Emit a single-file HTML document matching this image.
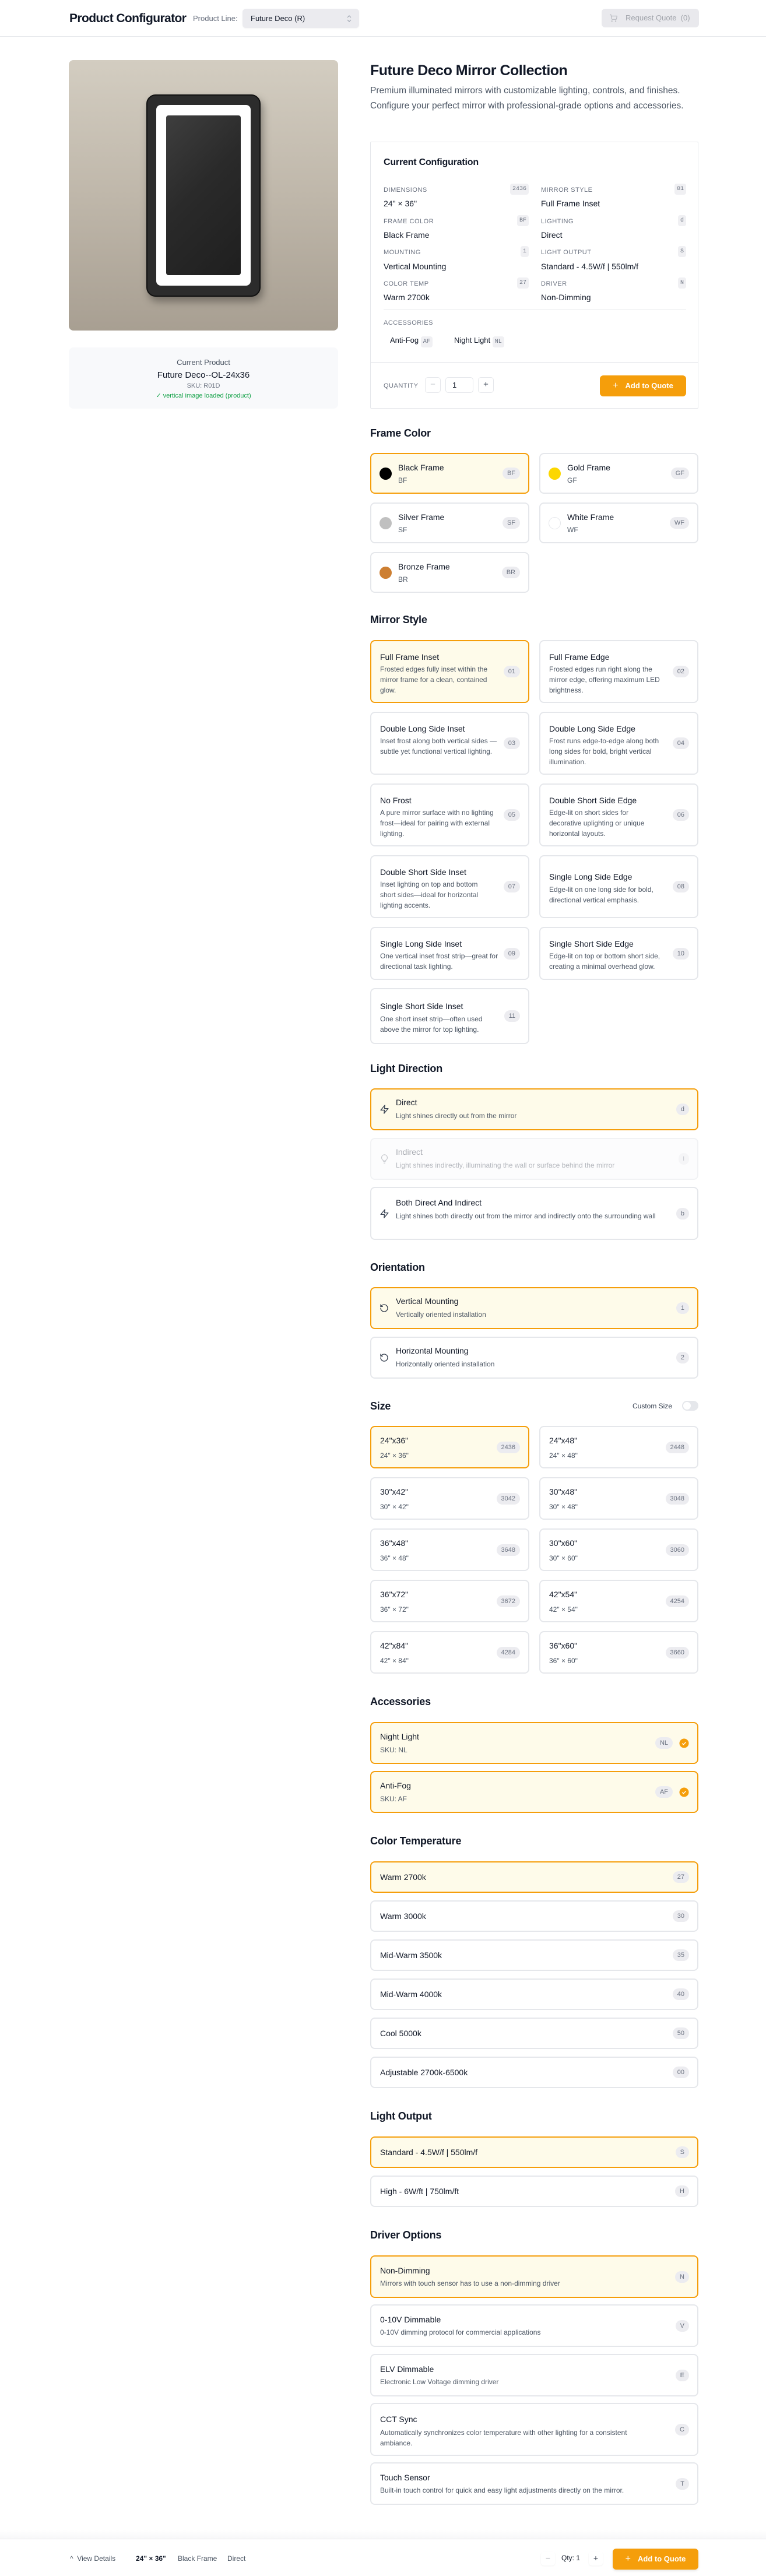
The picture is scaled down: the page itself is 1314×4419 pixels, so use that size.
<!DOCTYPE html>
<html><head><meta charset="utf-8">
<style>
*{box-sizing:border-box;margin:0;padding:0}
body{width:1314px;height:4419px;position:relative;background:#fff;font-family:"Liberation Sans",sans-serif;color:#111827;overflow:hidden}
.a{position:absolute}
.hdr{left:0;top:0;width:1314px;height:63px;border-bottom:1px solid #e5e7eb;background:#fff}
.h2{font-size:18px;font-weight:bold;color:#111827;left:635px;line-height:22px;letter-spacing:-0.2px}
.card{position:absolute;border:2px solid #e5e7eb;border-radius:8px;background:#fff}
.sel{border-color:#f59e0b;background:#fefbea}
.badge{position:absolute;right:14px;top:50%;transform:translateY(-50%);background:#ececf0;color:#6b7280;font-size:11px;border-radius:10px;padding:4px 8px;line-height:12px}
.t{font-size:14px;color:#111827;line-height:18px}
.d{font-size:12px;color:#4b5563;line-height:18px}
.L{left:635px;width:273px}
.R{left:925px;width:273px}
.F{left:635px;width:563px}
.lbl{font-size:11px;color:#6b7280;letter-spacing:0.5px;text-transform:uppercase}
.val{font-size:14px;color:#111827;font-weight:500}
.cb{background:#f0f0f3;color:#6b7280;font-size:10px;border-radius:4px;padding:4px 4px;font-family:"Liberation Mono",monospace}
.ico{position:absolute;left:14px;top:50%;transform:translateY(-50%)}
</style></head><body>

<div class="a hdr"></div>
<div class="a" style="left:119px;top:20px;font-size:21px;font-weight:bold;letter-spacing:-0.6px;line-height:24px">Product Configurator</div>
<div class="a" style="left:331px;top:24px;font-size:13px;color:#6b7280">Product Line:</div>
<div class="a" style="left:416px;top:15px;width:200px;height:33px;background:#ebebef;border-radius:6px;box-shadow:0 1px 2px rgba(0,0,0,.05)">
 <div class="a" style="left:14px;top:9px;font-size:13px;color:#111827">Future Deco (R)</div>
 <svg class="a" style="left:178px;top:10px" width="10" height="14" viewBox="0 0 10 14"><path d="M2 5l3-3 3 3M2 9l3 3 3-3" fill="none" stroke="#9ca3af" stroke-width="1.2"/></svg>
</div>
<div class="a" style="left:1032px;top:15px;width:167px;height:32px;background:#e9e9ed;border-radius:6px">
 <svg class="a" style="left:13px;top:9px" width="14" height="14" viewBox="0 0 24 24" fill="none" stroke="#b8bac0" stroke-width="2"><circle cx="8" cy="21" r="1"/><circle cx="19" cy="21" r="1"/><path d="M2 2h3l2.7 12.4a2 2 0 0 0 2 1.6h9.7a2 2 0 0 0 2-1.6L23 6H6"/></svg>
 <div class="a" style="left:41px;top:8px;font-size:13px;color:#a3a6ad;white-space:nowrap">Request Quote&nbsp; (0)</div>
</div>

<!-- image -->
<div class="a" style="left:118px;top:103px;width:462px;height:464px;border-radius:8px;background:linear-gradient(180deg,#d3cdc1 0%,#bfb7aa 50%,#a89f92 100%);overflow:hidden">
 <div class="a" style="left:133px;top:59px;width:196px;height:347px;border-radius:16px;background:#2c2c2c;border:2px solid #111;box-shadow:4px 8px 14px rgba(0,0,0,.35)"></div>
 <div class="a" style="left:150px;top:77px;width:162px;height:310px;border-radius:8px;background:#fff"></div>
 <div class="a" style="left:167px;top:95px;width:128px;height:274px;border-radius:4px;background:linear-gradient(135deg,#3e3e3e 0%,#2a2a2a 45%,#1f1f1f 100%)"></div>
</div>
<div class="a" style="left:118px;top:596px;width:462px;height:105px;border-radius:8px;background:#f8f9fb;text-align:center">
 <div style="margin-top:18px;font-size:13px;color:#4b5563">Current Product</div>
 <div style="margin-top:6px;font-size:15px;color:#111827;font-weight:500">Future Deco--OL-24x36</div>
 <div style="margin-top:4px;font-size:11px;color:#6b7280">SKU: R01D</div>
 <div style="margin-top:4px;font-size:11px;color:#16a34a">✓ vertical image loaded (product)</div>
</div>

<!-- right top -->
<div class="a" style="left:635px;top:106px;font-size:25px;font-weight:bold;letter-spacing:-0.5px;line-height:30px">Future Deco Mirror Collection</div>
<div class="a" style="left:635px;top:143px;width:565px;font-size:15.5px;color:#4b5563;line-height:26px">Premium illuminated mirrors with customizable lighting, controls, and finishes. Configure your perfect mirror with professional-grade options and accessories.</div>

<div class="a" style="left:635px;top:243px;width:563px;height:458px;border:1px solid #e5e7eb;border-radius:2px">
 <div class="a" style="left:22px;top:26px;font-size:16px;font-weight:bold;letter-spacing:-0.2px">Current Configuration</div>
 <div class="a" style="left:22px;top:76px;width:249px">
  <div class="a lbl" style="left:0;top:0">Dimensions</div><div class="a cb" style="right:0;top:-5px">2436</div>
  <div class="a val" style="left:0;top:21px">24" × 36"</div>
  <div class="a lbl" style="left:0;top:54px">Frame Color</div><div class="a cb" style="right:0;top:49px">BF</div>
  <div class="a val" style="left:0;top:75px">Black Frame</div>
  <div class="a lbl" style="left:0;top:107px">Mounting</div><div class="a cb" style="right:0;top:102px">1</div>
  <div class="a val" style="left:0;top:129px">Vertical Mounting</div>
  <div class="a lbl" style="left:0;top:161px">Color Temp</div><div class="a cb" style="right:0;top:156px">27</div>
  <div class="a val" style="left:0;top:182px">Warm 2700k</div>
 </div>
 <div class="a" style="left:292px;top:76px;width:249px">
  <div class="a lbl" style="left:0;top:0">Mirror Style</div><div class="a cb" style="right:0;top:-5px">01</div>
  <div class="a val" style="left:0;top:21px">Full Frame Inset</div>
  <div class="a lbl" style="left:0;top:54px">Lighting</div><div class="a cb" style="right:0;top:49px">d</div>
  <div class="a val" style="left:0;top:75px">Direct</div>
  <div class="a lbl" style="left:0;top:107px">Light Output</div><div class="a cb" style="right:0;top:102px">S</div>
  <div class="a val" style="left:0;top:129px">Standard - 4.5W/f | 550lm/f</div>
  <div class="a lbl" style="left:0;top:161px">Driver</div><div class="a cb" style="right:0;top:156px">N</div>
  <div class="a val" style="left:0;top:182px">Non-Dimming</div>
 </div>
 <div class="a" style="left:22px;top:287px;width:519px;border-top:1px solid #e5e7eb"></div>
 <div class="a lbl" style="left:22px;top:304px">Accessories</div>
 <div class="a" style="left:33px;top:332px;font-size:13px;color:#111827">Anti-Fog <span class="cb">AF</span></div>
 <div class="a" style="left:143px;top:332px;font-size:13px;color:#111827">Night Light <span class="cb">NL</span></div>
 <div class="a" style="left:0;top:377px;width:561px;border-top:1px solid #e5e7eb"></div>
 <div class="a lbl" style="left:22px;top:412px">Quantity</div>
 <div class="a" style="left:93px;top:403px;width:27px;height:27px;border:1px solid #e5e7eb;border-radius:5px;text-align:center;line-height:24px;color:#c4c6cc;font-size:15px">−</div>
 <div class="a" style="left:128px;top:403px;width:48px;height:27px;border:1px solid #e5e7eb;border-radius:5px;padding-left:11px;line-height:25px;font-size:13px">1</div>
 <div class="a" style="left:184px;top:403px;width:27px;height:27px;border:1px solid #e5e7eb;border-radius:5px;text-align:center;line-height:24px;color:#374151;font-size:15px">+</div>
 <div class="a" style="left:393px;top:400px;width:148px;height:36px;background:#f59e0b;border-radius:6px;color:#fff;font-size:13px;font-weight:bold;line-height:36px;text-align:center"><span style="font-weight:normal;font-size:16px;margin-right:12px">+</span>Add to Quote</div>
</div>

<!-- Frame Color -->
<div class="a h2" style="top:732px">Frame Color</div>
<div class="card sel L" style="top:777px;height:70px"><div class="a" style="left:14px;top:23px;width:21px;height:21px;border-radius:50%;background:#000"></div><div class="a t" style="left:46px;top:14px">Black Frame</div><div class="a d" style="left:46px;top:36px">BF</div><span class="badge">BF</span></div>
<div class="card R" style="top:777px;height:70px"><div class="a" style="left:14px;top:23px;width:21px;height:21px;border-radius:50%;background:#fcd700"></div><div class="a t" style="left:46px;top:14px">Gold Frame</div><div class="a d" style="left:46px;top:36px">GF</div><span class="badge">GF</span></div>
<div class="card L" style="top:862px;height:70px"><div class="a" style="left:14px;top:23px;width:21px;height:21px;border-radius:50%;background:#c0c0c0"></div><div class="a t" style="left:46px;top:14px">Silver Frame</div><div class="a d" style="left:46px;top:36px">SF</div><span class="badge">SF</span></div>
<div class="card R" style="top:862px;height:70px"><div class="a" style="left:14px;top:23px;width:21px;height:21px;border-radius:50%;background:#fff;border:1px solid #e5e7eb"></div><div class="a t" style="left:46px;top:14px">White Frame</div><div class="a d" style="left:46px;top:36px">WF</div><span class="badge">WF</span></div>
<div class="card L" style="top:947px;height:70px"><div class="a" style="left:14px;top:23px;width:21px;height:21px;border-radius:50%;background:#cd7f32"></div><div class="a t" style="left:46px;top:14px">Bronze Frame</div><div class="a d" style="left:46px;top:36px">BR</div><span class="badge">BR</span></div>

<!-- Mirror Style -->
<div class="a h2" style="top:1052px">Mirror Style</div>
<div class="card sel L" style="top:1098px;height:108px"><div class="a t" style="left:15px;top:18px">Full Frame Inset</div><div class="a d" style="left:15px;top:39px;width:205px">Frosted edges fully inset within the mirror frame for a clean, contained glow.</div><span class="badge">01</span></div>
<div class="card R" style="top:1098px;height:108px"><div class="a t" style="left:15px;top:18px">Full Frame Edge</div><div class="a d" style="left:15px;top:39px;width:210px">Frosted edges run right along the mirror edge, offering maximum LED brightness.</div><span class="badge">02</span></div>
<div class="card L" style="top:1221px;height:108px"><div class="a t" style="left:15px;top:18px">Double Long Side Inset</div><div class="a d" style="left:15px;top:39px;width:205px">Inset frost along both vertical sides —subtle yet functional vertical lighting.</div><span class="badge">03</span></div>
<div class="card R" style="top:1221px;height:108px"><div class="a t" style="left:15px;top:18px">Double Long Side Edge</div><div class="a d" style="left:15px;top:39px;width:210px">Frost runs edge-to-edge along both long sides for bold, bright vertical illumination.</div><span class="badge">04</span></div>
<div class="card L" style="top:1344px;height:108px"><div class="a t" style="left:15px;top:18px">No Frost</div><div class="a d" style="left:15px;top:39px;width:205px">A pure mirror surface with no lighting frost—ideal for pairing with external lighting.</div><span class="badge">05</span></div>
<div class="card R" style="top:1344px;height:108px"><div class="a t" style="left:15px;top:18px">Double Short Side Edge</div><div class="a d" style="left:15px;top:39px;width:190px">Edge-lit on short sides for decorative uplighting or unique horizontal layouts.</div><span class="badge">06</span></div>
<div class="card L" style="top:1467px;height:108px"><div class="a t" style="left:15px;top:18px">Double Short Side Inset</div><div class="a d" style="left:15px;top:39px;width:195px">Inset lighting on top and bottom short sides—ideal for horizontal lighting accents.</div><span class="badge">07</span></div>
<div class="card R" style="top:1467px;height:108px"><div class="a t" style="left:15px;top:26px">Single Long Side Edge</div><div class="a d" style="left:15px;top:48px;width:205px">Edge-lit on one long side for bold, directional vertical emphasis.</div><span class="badge">08</span></div>
<div class="card L" style="top:1590px;height:91px"><div class="a t" style="left:15px;top:18px">Single Long Side Inset</div><div class="a d" style="left:15px;top:39px;width:205px">One vertical inset frost strip—great for directional task lighting.</div><span class="badge">09</span></div>
<div class="card R" style="top:1590px;height:91px"><div class="a t" style="left:15px;top:18px">Single Short Side Edge</div><div class="a d" style="left:15px;top:39px;width:212px">Edge-lit on top or bottom short side, creating a minimal overhead glow.</div><span class="badge">10</span></div>
<div class="card L" style="top:1695px;height:96px"><div class="a t" style="left:15px;top:20px">Single Short Side Inset</div><div class="a d" style="left:15px;top:42px;width:200px">One short inset strip—often used above the mirror for top lighting.</div><span class="badge">11</span></div>

<!-- Light Direction -->
<div class="a h2" style="top:1822px">Light Direction</div>
<div class="card sel F" style="top:1867px;height:72px"><svg class="ico" width="17" height="17" viewBox="0 0 24 24" fill="none" stroke="#374151" stroke-width="1.8" stroke-linejoin="round"><path d="M13 2L3 14h9l-1 8 10-12h-9l1-8z"/></svg><div class="a t" style="left:42px;top:13px">Direct</div><div class="a d" style="left:42px;top:36px">Light shines directly out from the mirror</div><span class="badge">d</span></div>
<div class="card F" style="top:1952px;height:72px;background:#fcfcfd;border-color:#f1f2f4"><svg class="ico" width="17" height="17" viewBox="0 0 24 24" fill="none" stroke="#c7c9ce" stroke-width="1.8"><path d="M9 18h6M10 22h4M12 2a7 7 0 0 0-4 12.7c.6.5 1 1.3 1 2.3h6c0-1 .4-1.8 1-2.3A7 7 0 0 0 12 2z"/></svg><div class="a t" style="left:42px;top:13px;color:#a8abb2">Indirect</div><div class="a d" style="left:42px;top:36px;color:#b5b8be">Light shines indirectly, illuminating the wall or surface behind the mirror</div><span class="badge" style="background:#f5f5f7;color:#c4c6cc">i</span></div>
<div class="card F" style="top:2036px;height:91px"><svg class="ico" width="17" height="17" viewBox="0 0 24 24" fill="none" stroke="#374151" stroke-width="1.8" stroke-linejoin="round"><path d="M13 2L3 14h9l-1 8 10-12h-9l1-8z"/></svg><div class="a t" style="left:42px;top:16px">Both Direct And Indirect</div><div class="a d" style="left:42px;top:39px;width:470px">Light shines both directly out from the mirror and indirectly onto the surrounding wall</div><span class="badge">b</span></div>

<!-- Orientation -->
<div class="a h2" style="top:2163px">Orientation</div>
<div class="card sel F" style="top:2208px;height:72px"><svg class="ico" width="16" height="16" viewBox="0 0 24 24" fill="none" stroke="#374151" stroke-width="2" stroke-linecap="round"><path d="M3 12a9 9 0 1 0 9-9 9.75 9.75 0 0 0-6.74 2.74L3 8"/><path d="M3 3v5h5"/></svg><div class="a t" style="left:42px;top:13px">Vertical Mounting</div><div class="a d" style="left:42px;top:36px">Vertically oriented installation</div><span class="badge">1</span></div>
<div class="card F" style="top:2293px;height:72px"><svg class="ico" width="16" height="16" viewBox="0 0 24 24" fill="none" stroke="#374151" stroke-width="2" stroke-linecap="round"><path d="M3 12a9 9 0 1 0 9-9 9.75 9.75 0 0 0-6.74 2.74L3 8"/><path d="M3 3v5h5"/></svg><div class="a t" style="left:42px;top:13px">Horizontal Mounting</div><div class="a d" style="left:42px;top:36px">Horizontally oriented installation</div><span class="badge">2</span></div>

<!-- Size -->
<div class="a h2" style="top:2401px">Size</div>
<div class="a" style="left:1085px;top:2405px;font-size:12px;color:#374151">Custom Size</div>
<div class="a" style="left:1170px;top:2403px;width:28px;height:17px;border-radius:9px;background:#e5e7eb"><div class="a" style="left:2px;top:2px;width:13px;height:13px;border-radius:50%;background:#fff"></div></div>
<div class="card sel L" style="top:2446px;height:73px"><div class="a t" style="left:15px;top:14px">24"x36"</div><div class="a d" style="left:15px;top:40px">24" × 36"</div><span class="badge">2436</span></div>
<div class="card R" style="top:2446px;height:73px"><div class="a t" style="left:15px;top:14px">24"x48"</div><div class="a d" style="left:15px;top:40px">24" × 48"</div><span class="badge">2448</span></div>
<div class="card L" style="top:2534px;height:73px"><div class="a t" style="left:15px;top:14px">30"x42"</div><div class="a d" style="left:15px;top:40px">30" × 42"</div><span class="badge">3042</span></div>
<div class="card R" style="top:2534px;height:73px"><div class="a t" style="left:15px;top:14px">30"x48"</div><div class="a d" style="left:15px;top:40px">30" × 48"</div><span class="badge">3048</span></div>
<div class="card L" style="top:2622px;height:73px"><div class="a t" style="left:15px;top:14px">36"x48"</div><div class="a d" style="left:15px;top:40px">36" × 48"</div><span class="badge">3648</span></div>
<div class="card R" style="top:2622px;height:73px"><div class="a t" style="left:15px;top:14px">30"x60"</div><div class="a d" style="left:15px;top:40px">30" × 60"</div><span class="badge">3060</span></div>
<div class="card L" style="top:2710px;height:73px"><div class="a t" style="left:15px;top:14px">36"x72"</div><div class="a d" style="left:15px;top:40px">36" × 72"</div><span class="badge">3672</span></div>
<div class="card R" style="top:2710px;height:73px"><div class="a t" style="left:15px;top:14px">42"x54"</div><div class="a d" style="left:15px;top:40px">42" × 54"</div><span class="badge">4254</span></div>
<div class="card L" style="top:2798px;height:73px"><div class="a t" style="left:15px;top:14px">42"x84"</div><div class="a d" style="left:15px;top:40px">42" × 84"</div><span class="badge">4284</span></div>
<div class="card R" style="top:2798px;height:73px"><div class="a t" style="left:15px;top:14px">36"x60"</div><div class="a d" style="left:15px;top:40px">36" × 60"</div><span class="badge">3660</span></div>

<!-- Accessories -->
<div class="a h2" style="top:2908px">Accessories</div>
<div class="card sel F" style="top:2954px;height:72px"><div class="a t" style="left:15px;top:14px">Night Light</div><div class="a d" style="left:15px;top:37px">SKU: NL</div><span class="badge" style="right:42px">NL</span><svg class="a" style="right:14px;top:26px" width="17" height="17" viewBox="0 0 18 18"><circle cx="9" cy="9" r="8.5" fill="#f59e0b"/><path d="M5.5 9.2l2.3 2.2 4.5-4.6" fill="none" stroke="#fff" stroke-width="1.4"/></svg></div>
<div class="card sel F" style="top:3038px;height:72px"><div class="a t" style="left:15px;top:14px">Anti-Fog</div><div class="a d" style="left:15px;top:37px">SKU: AF</div><span class="badge" style="right:42px">AF</span><svg class="a" style="right:14px;top:26px" width="17" height="17" viewBox="0 0 18 18"><circle cx="9" cy="9" r="8.5" fill="#f59e0b"/><path d="M5.5 9.2l2.3 2.2 4.5-4.6" fill="none" stroke="#fff" stroke-width="1.4"/></svg></div>

<!-- Color Temperature -->
<div class="a h2" style="top:3147px">Color Temperature</div>
<div class="card sel F" style="top:3193px;height:54px"><div class="a t" style="left:15px;top:16px">Warm 2700k</div><span class="badge">27</span></div>
<div class="card F" style="top:3260px;height:54px"><div class="a t" style="left:15px;top:16px">Warm 3000k</div><span class="badge">30</span></div>
<div class="card F" style="top:3327px;height:54px"><div class="a t" style="left:15px;top:16px">Mid-Warm 3500k</div><span class="badge">35</span></div>
<div class="card F" style="top:3394px;height:54px"><div class="a t" style="left:15px;top:16px">Mid-Warm 4000k</div><span class="badge">40</span></div>
<div class="card F" style="top:3461px;height:54px"><div class="a t" style="left:15px;top:16px">Cool 5000k</div><span class="badge">50</span></div>
<div class="card F" style="top:3528px;height:54px"><div class="a t" style="left:15px;top:16px">Adjustable 2700k-6500k</div><span class="badge">00</span></div>

<!-- Light Output -->
<div class="a h2" style="top:3619px">Light Output</div>
<div class="card sel F" style="top:3665px;height:54px"><div class="a t" style="left:15px;top:16px">Standard - 4.5W/f | 550lm/f</div><span class="badge">S</span></div>
<div class="card F" style="top:3732px;height:54px"><div class="a t" style="left:15px;top:16px">High - 6W/ft | 750lm/ft</div><span class="badge">H</span></div>

<!-- Driver -->
<div class="a h2" style="top:3823px">Driver Options</div>
<div class="card sel F" style="top:3869px;height:73px"><div class="a t" style="left:15px;top:15px">Non-Dimming</div><div class="a d" style="left:15px;top:37px">Mirrors with touch sensor has to use a non-dimming driver</div><span class="badge">N</span></div>
<div class="card F" style="top:3953px;height:73px"><div class="a t" style="left:15px;top:15px">0-10V Dimmable</div><div class="a d" style="left:15px;top:37px">0-10V dimming protocol for commercial applications</div><span class="badge">V</span></div>
<div class="card F" style="top:4038px;height:73px"><div class="a t" style="left:15px;top:15px">ELV Dimmable</div><div class="a d" style="left:15px;top:37px">Electronic Low Voltage dimming driver</div><span class="badge">E</span></div>
<div class="card F" style="top:4122px;height:91px"><div class="a t" style="left:15px;top:17px">CCT Sync</div><div class="a d" style="left:15px;top:40px;width:480px">Automatically synchronizes color temperature with other lighting for a consistent ambiance.</div><span class="badge">C</span></div>
<div class="card F" style="top:4224px;height:73px"><div class="a t" style="left:15px;top:15px">Touch Sensor</div><div class="a d" style="left:15px;top:37px">Built-in touch control for quick and easy light adjustments directly on the mirror.</div><span class="badge">T</span></div>

<!-- Footer -->
<div class="a" style="left:0;top:4340px;width:1314px;height:16px;background:linear-gradient(#fff,#f7f7f8)"></div>
<div class="a" style="left:0;top:4355px;width:1314px;height:64px;background:#fff;border-top:1px solid #e5e7eb">
 <div class="a" style="left:120px;top:26px;font-size:12px;color:#4b5563;white-space:nowrap">^&nbsp; View Details</div>
 <div class="a" style="left:233px;top:26px;font-size:12px;color:#111827;font-weight:bold">24" × 36"</div>
 <div class="a" style="left:305px;top:26px;font-size:12px;color:#4b5563">Black Frame</div>
 <div class="a" style="left:390px;top:26px;font-size:12px;color:#4b5563">Direct</div>
 <div class="a" style="left:928px;top:21px;width:24px;height:24px;border-radius:5px;text-align:center;line-height:22px;color:#b0b3b9;font-size:14px;box-shadow:0 1px 2px rgba(0,0,0,.06)">−</div>
 <div class="a" style="left:963px;top:25px;font-size:12px;color:#111827">Qty: 1</div>
 <div class="a" style="left:1010px;top:21px;width:24px;height:24px;border-radius:5px;text-align:center;line-height:22px;color:#374151;font-size:14px;box-shadow:0 1px 2px rgba(0,0,0,.06)">+</div>
 <div class="a" style="left:1051px;top:16px;width:147px;height:36px;background:#f59e0b;border-radius:6px;color:#fff;font-size:13px;font-weight:bold;line-height:36px;text-align:center;box-shadow:0 2px 4px rgba(0,0,0,.1)"><span style="font-weight:normal;font-size:16px;margin-right:12px">+</span>Add to Quote</div>
</div>
</body></html>
